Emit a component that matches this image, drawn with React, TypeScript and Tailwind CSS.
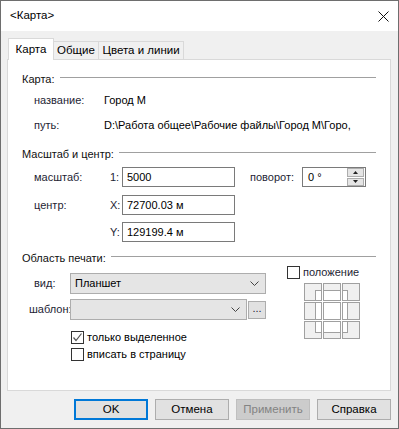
import React from 'react';

const font = { fontFamily: '"Liberation Sans", Arial, sans-serif' };

const GroupHeader: React.FC<{ title: string }> = ({ title }) => (
    <div className="flex items-center h-[18px] text-[11px] text-[#101010]">
        <span className="whitespace-nowrap">{title}</span>
        <div className="flex-1 h-px bg-[#a0a0a0] ml-[5px] -mt-[4px]" />
    </div>
);

const Chevron: React.FC = () => (
    <svg width="9" height="5" viewBox="0 0 9 5" className="shrink-0">
        <path d="M0.5 0.5 L4.5 4.5 L8.5 0.5" fill="none" stroke="#444" strokeWidth="1" />
    </svg>
);

const Checkbox: React.FC<{ checked?: boolean }> = ({ checked }) => (
    <div className="w-[13px] h-[13px] border border-[#333] bg-white flex items-center justify-center shrink-0">
        {checked && (
            <svg width="11" height="11" viewBox="0 0 11 11">
                <path d="M1.5 5.5 L4 8.5 L9.5 1.5" fill="none" stroke="#555" strokeWidth="1.2" />
            </svg>
        )}
    </div>
);

const PositionGrid: React.FC = () => {
    const cells: { x: number; y: number }[] = [];
    [0, 19, 38].forEach((y) => [0, 19, 38].forEach((x) => cells.push({ x, y })));
    return (
        <svg width="57" height="57" viewBox="0 0 57 57">
            <defs>
                <clipPath id="cellsClip">
                    {cells.map((c, i) => (
                        <rect key={i} x={c.x} y={c.y} width="18" height="18" />
                    ))}
                </clipPath>
            </defs>
            {cells.map((c, i) => (
                <rect key={i} x={c.x + 0.5} y={c.y + 0.5} width="17" height="17" fill="#f0f0f0" />
            ))}
            <rect x="11.5" y="7.5" width="32" height="42" fill="#fff" stroke="#a0a0a0" clipPath="url(#cellsClip)" />
            {cells.map((c, i) => (
                <rect key={i} x={c.x + 0.5} y={c.y + 0.5} width="17" height="17" fill="none" stroke="#a0a0a0" />
            ))}
        </svg>
    );
};

const App: React.FC = () => {
    return (
        <div style={font} className="w-[399px] h-[429px] border border-[#6e6e6e] bg-[#f0f0f0] flex flex-col text-[11px] text-black">
            {/* title bar */}
            <div className="h-[30px] bg-white flex items-center justify-between pl-[9px] pr-[9px] shrink-0">
                <span className="text-[11.5px] text-black">&lt;Карта&gt;</span>
                <svg width="11" height="11" viewBox="0 0 11 11">
                    <path d="M0.5 0.5 L10.5 10.5 M10.5 0.5 L0.5 10.5" stroke="#111" strokeWidth="1" />
                </svg>
            </div>

            <div className="flex-1 flex flex-col pl-[6px] pr-[7px]">
                {/* tabs */}
                <div className="flex items-end h-[21px] mt-[7px] pl-[1px] text-[11.5px]">
                    <div className="relative z-10 h-[22px] -mb-px w-[46px] bg-white border border-[#d9d9d9] border-b-0 flex items-center justify-center">
                        Карта
                    </div>
                    <div className="h-[18px] w-[46px] -ml-px bg-[#f0f0f0] border border-[#d9d9d9] border-b-0 flex items-center justify-center">
                        Общие
                    </div>
                    <div className="h-[18px] w-[86px] -ml-px bg-[#f0f0f0] border border-[#d9d9d9] border-b-0 flex items-center justify-center">
                        Цвета и линии
                    </div>
                </div>

                {/* panel */}
                <div className="h-[332px] w-[384px] bg-white border border-[#d9d9d9] flex flex-col pl-[14px] pr-[14px] pt-[10px]">
                    <GroupHeader title="Карта:" />
                    <div className="flex items-center h-[18px] mt-[3px] pl-[12px]">
                        <span className="w-[70px] text-[#1e1e34]">название:</span>
                        <span>Город М</span>
                    </div>
                    <div className="flex items-center h-[18px] mt-[7px] pl-[12px]">
                        <span className="w-[70px] text-[#1e1e34]">путь:</span>
                        <span className="whitespace-nowrap">D:\Работа общее\Рабочие файлы\Город М\Горо,</span>
                    </div>

                    <div className="mt-[11px]">
                        <GroupHeader title="Масштаб и центр:" />
                    </div>
                    <div className="flex items-center h-[20px] mt-[4px] pl-[12px]">
                        <span className="w-[76px] text-[#1e1e34]">масштаб:</span>
                        <span className="w-[12px] text-[#1e1e34]">1:</span>
                        <div className="w-[113px] h-[20px] border border-[#7a7a7a] flex items-center pl-[4px]">5000</div>
                        <span className="ml-[15px] w-[52px] text-[#1e1e34]">поворот:</span>
                        <div className="w-[64px] h-[20px] border border-[#7a7a7a] flex items-center">
                            <span className="flex-1 pl-[5px]">0 °</span>
                            <div className="w-[17px] h-[18px] mr-px flex flex-col gap-px">
                                <div className="flex-1 bg-[#e5e5e5] border border-[#adadad] flex items-center justify-center">
                                    <svg width="5" height="3" viewBox="0 0 5 3"><path d="M0 3 L2.5 0 L5 3 Z" fill="#222" /></svg>
                                </div>
                                <div className="flex-1 bg-[#e5e5e5] border border-[#adadad] flex items-center justify-center">
                                    <svg width="5" height="3" viewBox="0 0 5 3"><path d="M0 0 L2.5 3 L5 0 Z" fill="#222" /></svg>
                                </div>
                            </div>
                        </div>
                    </div>
                    <div className="flex items-center h-[20px] mt-[8px] pl-[12px]">
                        <span className="w-[76px] text-[#1e1e34]">центр:</span>
                        <span className="w-[12px] text-[#1e1e34]">X:</span>
                        <div className="w-[113px] h-[20px] border border-[#7a7a7a] flex items-center pl-[4px]">72700.03 м</div>
                    </div>
                    <div className="flex items-center h-[20px] mt-[7px] pl-[12px]">
                        <span className="w-[76px]" />
                        <span className="w-[12px] text-[#1e1e34]">Y:</span>
                        <div className="w-[113px] h-[20px] border border-[#7a7a7a] flex items-center pl-[4px]">129199.4 м</div>
                    </div>

                    <div className="mt-[7px]">
                        <GroupHeader title="Область печати:" />
                    </div>
                    <div className="flex">
                        <div className="flex flex-col w-[244px]">
                            <div className="flex items-center h-[21px] mt-[6px]">
                                <span className="w-[48px] pl-[12px] text-[#1e1e34]">вид:</span>
                                <div className="w-[196px] h-[21px] bg-[#e5e5e5] border border-[#adadad] flex items-center justify-between pl-[4px] pr-[6px]">
                                    <span>Планшет</span>
                                    <Chevron />
                                </div>
                            </div>
                            <div className="flex items-center h-[21px] mt-[5px]">
                                <span className="w-[48px] pl-[7px] text-[#1e1e34] whitespace-nowrap">шаблон:</span>
                                <div className="w-[178px] h-[21px] bg-[#e5e5e5] border border-[#adadad] flex items-center justify-end pr-[6px]">
                                    <Chevron />
                                </div>
                                <div className="w-[18px] h-[18px] ml-px bg-[#e1e1e1] border border-[#adadad] flex items-center justify-center text-[#1e1e34] leading-none pb-[3px]">
                                    ...
                                </div>
                            </div>
                            <div className="flex items-center h-[15px] mt-[10px] pl-[49px] gap-[3px]">
                                <Checkbox checked />
                                <span>только выделенное</span>
                            </div>
                            <div className="flex items-center h-[15px] mt-[2px] pl-[49px] gap-[3px]">
                                <Checkbox />
                                <span>вписать в страницу</span>
                            </div>
                        </div>
                        <div className="flex flex-col ml-[21px] -mt-[2px]">
                            <div className="flex items-center gap-[3px] h-[15px]">
                                <Checkbox />
                                <span className="text-[#1e1e34]">положение</span>
                            </div>
                            <div className="mt-[3px] ml-[17px]">
                                <PositionGrid />
                            </div>
                        </div>
                    </div>
                </div>

                {/* buttons */}
                <div className="flex justify-end gap-[7px] mt-[8px] text-[11.5px] font-normal">
                    <button className="w-[74px] h-[21px] bg-[#e1e1e1] border-2 border-[#0078d7] text-black font-normal">OK</button>
                    <button className="w-[74px] h-[21px] bg-[#e1e1e1] border border-[#adadad] text-black font-normal">Отмена</button>
                    <button className="w-[74px] h-[21px] bg-[#cccccc] border border-[#bfbfbf] text-[#838383] font-normal">Применить</button>
                    <button className="w-[74px] h-[21px] bg-[#e1e1e1] border border-[#adadad] text-black font-normal">Справка</button>
                </div>
            </div>
        </div>
    );
};

export default App;
